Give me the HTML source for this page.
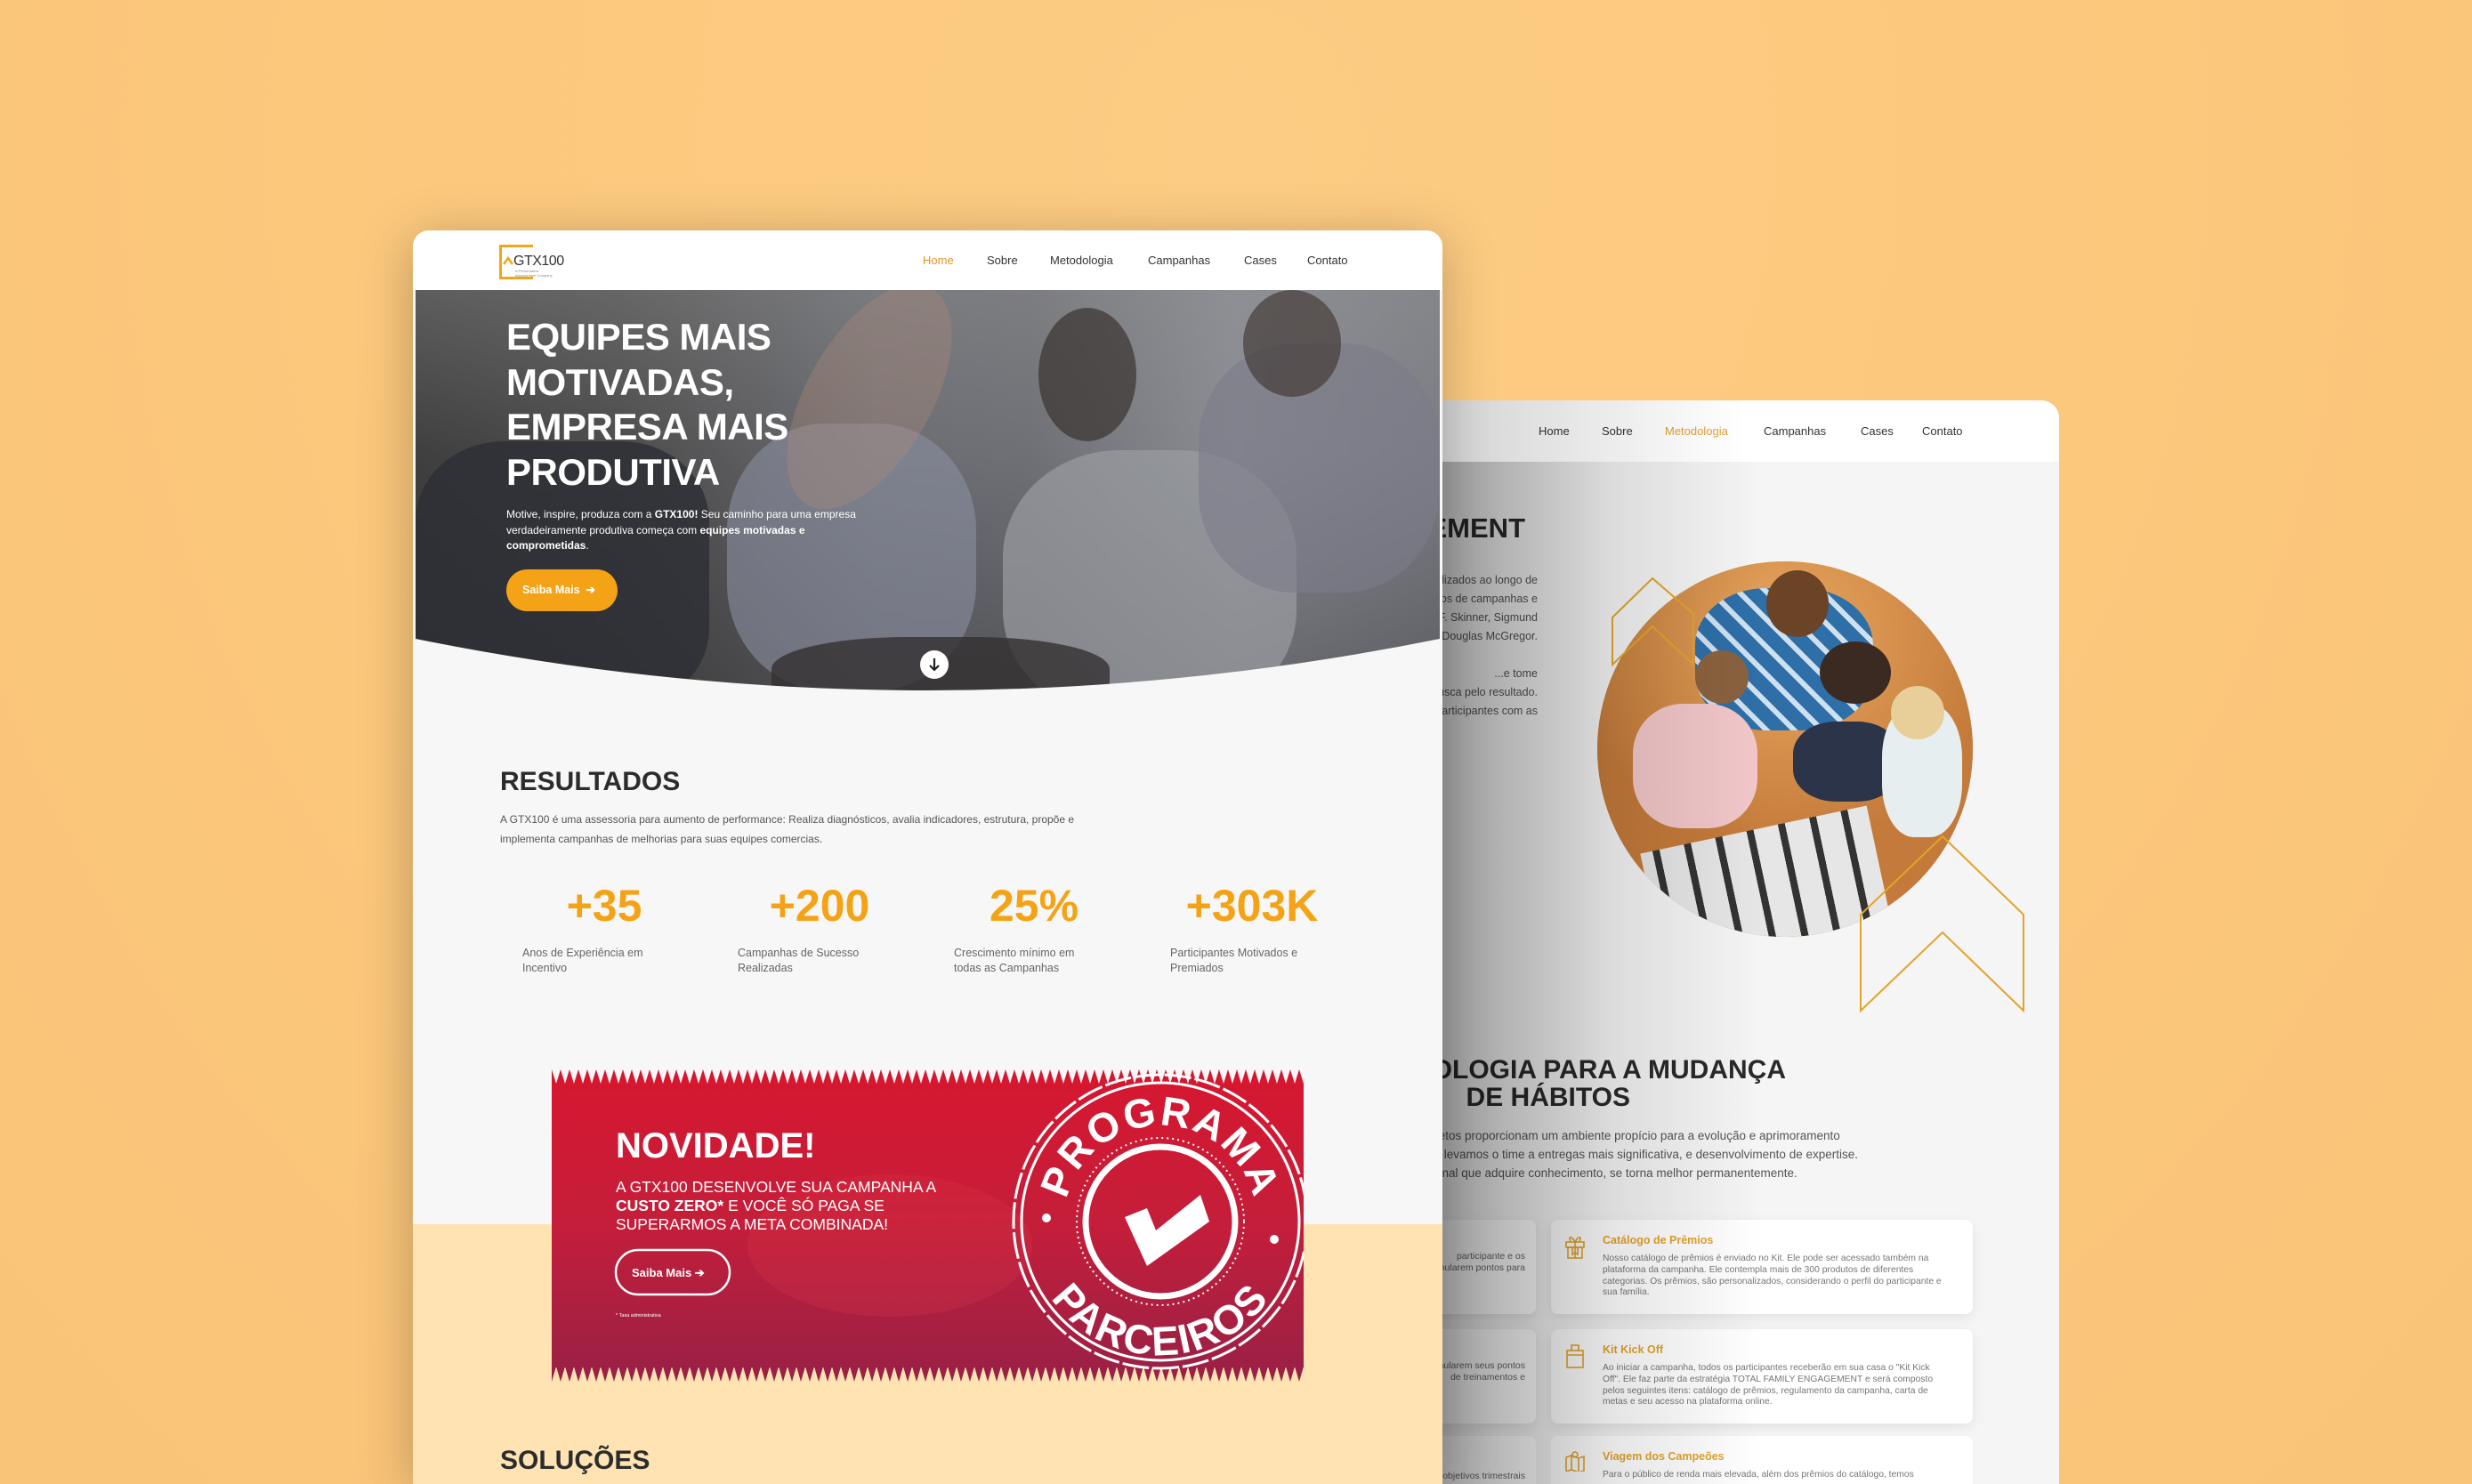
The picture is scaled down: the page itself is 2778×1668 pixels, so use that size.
<!DOCTYPE html>
<html><head><meta charset="utf-8">
<style>
*{margin:0;padding:0;box-sizing:border-box}
html,body{width:2778px;height:1668px;overflow:hidden}
body{background:#FBC87D;font-family:"Liberation Sans",sans-serif;position:relative}
.abs{position:absolute}
.nav a{position:absolute;font-size:13px;color:#333;text-decoration:none;white-space:nowrap}
</style></head><body>
<div class="abs" style="left:0;top:0;width:2778px;height:1668px;background:radial-gradient(ellipse at 50% 10%,#FCCC84 0%,#FBC77B 60%,#F9C378 100%)"></div>

<!-- BACK CARD -->
<div class="abs" style="left:1560px;top:450px;width:754px;height:1218px;border-radius:20px 20px 0 0;background:#f5f5f5;overflow:hidden">
  <div class="abs" style="left:0;top:0;width:754px;height:69px;background:#fff"></div>
  <div class="nav">
    <a style="left:169px;top:27px">Home</a>
    <a style="left:240px;top:27px">Sobre</a>
    <a style="left:311px;top:27px;color:#E0A030">Metodologia</a>
    <a style="left:422px;top:27px">Campanhas</a>
    <a style="left:531px;top:27px">Cases</a>
    <a style="left:600px;top:27px">Contato</a>
  </div>
  <div class="abs" style="right:600px;top:126px;font-weight:bold;font-size:31px;color:#2a2a2a;white-space:nowrap">TOTAL FAMILY ENGAGEMENT</div>
  <div class="abs" style="right:586px;top:192px;font-size:12.5px;color:#555;line-height:21px;text-align:right;white-space:nowrap">
  ...utilizados ao longo de<br>...nos de campanhas e<br>...F. Skinner, Sigmund<br>...e Douglas McGregor.<br><br>...e tome<br>...busca pelo resultado.<br>...participantes com as</div>
  <!-- photo circle -->
  <div class="abs" style="left:235px;top:181px;width:422px;height:422px;border-radius:50%;overflow:hidden;background:#c98a4a">
    <div class="abs" style="left:0;top:0;width:422px;height:422px;background:radial-gradient(circle at 50% 20%,#e8a860 0,#c47a3a 60%)"></div>
    <div class="abs" style="left:110px;top:30px;width:200px;height:160px;border-radius:40%;background:repeating-linear-gradient(45deg,#2e6fa8 0 10px,#cfe0ef 10px 16px,#2e6fa8 16px 22px)"></div>
    <div class="abs" style="left:190px;top:10px;width:70px;height:75px;border-radius:50%;background:#6b4326"></div>
    <div class="abs" style="left:40px;top:160px;width:140px;height:140px;border-radius:40%;background:#f2c7c9"></div>
    <div class="abs" style="left:110px;top:100px;width:60px;height:60px;border-radius:50%;background:#8a6240"></div>
    <div class="abs" style="left:250px;top:90px;width:80px;height:70px;border-radius:50%;background:#3a2a22"></div>
    <div class="abs" style="left:220px;top:180px;width:120px;height:90px;border-radius:40%;background:#2b3448"></div>
    <div class="abs" style="left:320px;top:160px;width:90px;height:150px;border-radius:40%;background:#e6eef0"></div>
    <div class="abs" style="left:330px;top:140px;width:60px;height:60px;border-radius:50%;background:#e8cf9a"></div>
    <div class="abs" style="left:60px;top:300px;width:260px;height:140px;transform:rotate(-12deg);background:repeating-linear-gradient(90deg,#e6e6e6 0 14px,#333 14px 22px,#e6e6e6 22px 36px)"></div>
  </div>
  <svg class="abs" style="left:0;top:0" width="754" height="1218">
    <polygon points="297,200 343,240 343,297 297,254 252,297 252,244" fill="none" stroke="#E3A42A" stroke-width="2"/>
    <polygon points="623,490 714,578 714,686 623,598 531,686 531,578" fill="none" stroke="#E3A42A" stroke-width="2"/>
  </svg>
  <div class="abs" style="right:307px;top:737px;font-weight:bold;font-size:30px;color:#2a2a2a;line-height:31px;white-space:nowrap">METODOLOGIA PARA A MUDANÇA</div>
  <div class="abs" style="right:482px;top:768px;font-weight:bold;font-size:30px;color:#2a2a2a;line-height:31px;white-space:nowrap">DE HÁBITOS</div>
  <div class="abs" style="right:226px;top:816px;font-size:13.5px;color:#555;line-height:21px;white-space:nowrap;text-align:left">Nossos projetos proporcionam um ambiente propício para a evolução e aprimoramento&nbsp;<br>Desta forma levamos o time a entregas mais significativa, e desenvolvimento de expertise.<br>Um profissional que adquire conhecimento, se torna melhor permanentemente.</div>
  <div class="abs" style="left:20px;top:921px;width:146px;height:106px;background:#fff;border-radius:8px;box-shadow:0 4px 14px rgba(0,0,0,.08)"></div>
  <div class="abs" style="left:20px;top:1044px;width:146px;height:106px;background:#fff;border-radius:8px;box-shadow:0 4px 14px rgba(0,0,0,.08)"></div>
  <div class="abs" style="left:20px;top:1164px;width:146px;height:54px;background:#fff;border-radius:8px 8px 0 0"></div>
  <div class="abs" style="right:600px;top:956px;font-size:10.5px;color:#666;line-height:13px;white-space:nowrap;text-align:right">participante e os<br>acumularem pontos para</div>
  <div class="abs" style="right:600px;top:1079px;font-size:10.5px;color:#666;line-height:13px;white-space:nowrap;text-align:right">acumularem seus pontos<br>de treinamentos e</div>
  <div class="abs" style="right:600px;top:1203px;font-size:10.5px;color:#666;white-space:nowrap">objetivos trimestrais</div>
  <!-- right cards -->
  <div class="abs" style="left:183px;top:921px;width:474px;height:106px;background:#fff;border-radius:8px;box-shadow:0 4px 14px rgba(0,0,0,.08)">
    <svg class="abs" style="left:16px;top:16px" width="22" height="28" viewBox="0 0 22 28" fill="none" stroke="#E3A42A" stroke-width="1.6"><rect x="1" y="9" width="20" height="6"/><rect x="3" y="15" width="16" height="12"/><path d="M11 9V27M11 9C7 1 3 3 6 8M11 9C15 1 19 3 16 8M8 15v8l3-2 3 2v-8"/></svg>
    <div class="abs" style="left:58px;top:16px;font-weight:bold;font-size:12.5px;color:#E3A42A">Catálogo de Prêmios</div>
    <div class="abs" style="left:58px;top:38px;font-size:10.3px;color:#777;line-height:12.8px;width:390px">Nosso catálogo de prêmios é enviado no Kit. Ele pode ser acessado também na plataforma da campanha. Ele contempla mais de 300 produtos de diferentes categorias. Os prêmios, são personalizados, considerando o perfil do participante e sua família.</div>
  </div>
  <div class="abs" style="left:183px;top:1044px;width:474px;height:106px;background:#fff;border-radius:8px;box-shadow:0 4px 14px rgba(0,0,0,.08)">
    <svg class="abs" style="left:16px;top:16px" width="22" height="28" viewBox="0 0 22 28" fill="none" stroke="#E3A42A" stroke-width="1.6"><rect x="2" y="8" width="18" height="19"/><path d="M2 13h18M7 8V2h8v6"/></svg>
    <div class="abs" style="left:58px;top:16px;font-weight:bold;font-size:12.5px;color:#E3A42A">Kit Kick Off</div>
    <div class="abs" style="left:58px;top:38px;font-size:10.3px;color:#777;line-height:12.8px;width:390px">Ao iniciar a campanha, todos os participantes receberão em sua casa o "Kit Kick Off". Ele faz parte da estratégia TOTAL FAMILY ENGAGEMENT e será composto pelos seguintes itens: catálogo de prêmios, regulamento da campanha, carta de metas e seu acesso na plataforma online.</div>
  </div>
  <div class="abs" style="left:183px;top:1164px;width:474px;height:54px;background:#fff;border-radius:8px 8px 0 0;overflow:hidden">
    <svg class="abs" style="left:16px;top:16px" width="22" height="24" viewBox="0 0 22 24" fill="none" stroke="#E3A42A" stroke-width="1.6"><path d="M1 8l6-2 8 3 6-2v16l-6 2-8-3-6 2z M7 6v16 M15 9v16"/><circle cx="11" cy="5" r="3"/></svg>
    <div class="abs" style="left:58px;top:16px;font-weight:bold;font-size:12.5px;color:#E3A42A">Viagem dos Campeões</div>
    <div class="abs" style="left:58px;top:38px;font-size:10.3px;color:#777;white-space:nowrap">Para o público de renda mais elevada, além dos prêmios do catálogo, temos</div>
  </div>
  <!-- front card shadow overlay -->
  <div class="abs" style="left:0;top:69px;width:420px;height:1149px;background:linear-gradient(90deg,rgba(0,0,0,.45) 0%,rgba(0,0,0,.3) 25%,rgba(0,0,0,.1) 60%,rgba(0,0,0,0) 100%)"></div>
  <div class="abs" style="left:0;top:0;width:400px;height:69px;background:linear-gradient(90deg,rgba(0,0,0,.2),rgba(0,0,0,0))"></div>
</div>

<!-- FRONT CARD -->
<div class="abs" style="left:464px;top:259px;width:1157px;height:1409px;border-radius:18px 18px 0 0;background:#f7f7f7;overflow:hidden;box-shadow:0 10px 60px rgba(0,0,0,.25)">
  <div class="abs" style="left:0;top:0;width:1157px;height:67px;background:#fff"></div>
  <!-- logo -->
  <div class="abs" style="left:97px;top:16px;width:18px;height:39px;border:3px solid #F2A517;border-right:none"></div>
  <div class="abs" style="left:97px;top:16px;width:38px;height:3px;background:#F2A517"></div>
  <div class="abs" style="left:97px;top:52px;width:38px;height:3px;background:#F2A517"></div>
  <svg class="abs" style="left:101px;top:29px" width="12" height="10"><path d="M1 9L6 2 11 9" fill="none" stroke="#F2A517" stroke-width="2.5"/></svg>
  <div class="abs" style="left:113px;top:26px;font-size:16px;color:#333;letter-spacing:-.5px">GTX100</div>
  <div class="abs" style="left:115px;top:43px;font-size:4px;color:#888;line-height:5px">A Performance<br>Improvement Company</div>
  <div class="nav">
    <a style="left:573px;top:26px;color:#E5922A">Home</a>
    <a style="left:645px;top:26px">Sobre</a>
    <a style="left:716px;top:26px">Metodologia</a>
    <a style="left:826px;top:26px">Campanhas</a>
    <a style="left:934px;top:26px">Cases</a>
    <a style="left:1005px;top:26px">Contato</a>
  </div>
  <!-- hero -->
  <div class="abs" style="left:3px;top:67px;width:1151px;height:460px;overflow:hidden;background:linear-gradient(90deg,#3f3f40 0%,#4d4c4c 20%,#6b6d73 45%,#6f7076 60%,#8a8c93 80%,#7b7d84 100%)">
    <div class="abs" style="left:0;top:0;width:1151px;height:460px;background:linear-gradient(180deg,rgba(150,150,150,.35) 0%,rgba(0,0,0,0) 40%,rgba(20,20,20,.3) 100%)"></div>
    <div class="abs" style="left:350px;top:150px;width:280px;height:300px;border-radius:40%;background:#8a8fa0;opacity:.6"></div>
    <div class="abs" style="left:660px;top:180px;width:330px;height:300px;border-radius:40%;background:#9a9ca3;opacity:.7"></div>
    <div class="abs" style="left:700px;top:20px;width:110px;height:150px;border-radius:50%;background:#3a3330;opacity:.7"></div>
    <div class="abs" style="left:880px;top:60px;width:270px;height:280px;border-radius:40%;background:#7b7c88;opacity:.6"></div>
    <div class="abs" style="left:930px;top:0;width:110px;height:120px;border-radius:50%;background:#3a302b;opacity:.6"></div>
    <div class="abs" style="left:0;top:170px;width:330px;height:300px;border-radius:30%;background:#2c2e35;opacity:.8"></div>
    <div class="abs" style="left:400px;top:390px;width:380px;height:90px;border-radius:40%;background:#333031;opacity:.8"></div>
    <div class="abs" style="left:440px;top:-20px;width:140px;height:280px;transform:rotate(30deg);background:#b08a77;opacity:.35;border-radius:50%"></div>
    <svg class="abs" style="left:0;top:0" width="1151" height="460"><path d="M0,392 Q575,508 1151,392 L1151,460 L0,460 Z" fill="#f7f7f7"/></svg>
    <div class="abs" style="left:567px;top:405px;width:32px;height:32px;border-radius:50%;background:#fff"></div>
    <svg class="abs" style="left:573px;top:411px" width="20" height="20"><path d="M10 3V16M5 11l5 5 5-5" fill="none" stroke="#222" stroke-width="2.2"/></svg>
  </div>
  <div class="abs" style="left:105px;top:95px;font-weight:bold;font-size:42px;line-height:50.5px;color:#fff;letter-spacing:-.5px">EQUIPES MAIS<br>MOTIVADAS,<br>EMPRESA MAIS<br>PRODUTIVA</div>
  <div class="abs" style="left:105px;top:311px;font-size:12px;line-height:17.5px;color:#fff;width:410px">Motive, inspire, produza com a <b>GTX100!</b> Seu caminho para uma empresa verdadeiramente produtiva começa com <b>equipes motivadas e comprometidas</b>.</div>
  <div class="abs" style="left:105px;top:381px;width:125px;height:47px;border-radius:24px;background:#F5A316;color:#fff;font-weight:bold;font-size:12.5px;line-height:47px;padding-left:18px">Saiba Mais &nbsp;➔</div>

  <!-- results -->
  <div class="abs" style="left:98px;top:603px;font-weight:bold;font-size:30px;color:#2c2c2c">RESULTADOS</div>
  <div class="abs" style="left:98px;top:652px;font-size:12px;color:#555;line-height:21.5px;width:700px">A GTX100 é uma assessoria para aumento de performance: Realiza diagnósticos, avalia indicadores, estrutura, propõe e implementa campanhas de melhorias para suas equipes comercias.</div>
  <div class="abs" style="left:115px;top:730px;width:200px;text-align:center;font-weight:bold;font-size:50px;color:#F5A316">+35</div>
  <div class="abs" style="left:357px;top:730px;width:200px;text-align:center;font-weight:bold;font-size:50px;color:#F5A316">+200</div>
  <div class="abs" style="left:598px;top:730px;width:200px;text-align:center;font-weight:bold;font-size:50px;color:#F5A316">25%</div>
  <div class="abs" style="left:843px;top:730px;width:200px;text-align:center;font-weight:bold;font-size:50px;color:#F5A316">+303K</div>
  <div class="abs" style="left:123px;top:804px;font-size:12.5px;color:#666;line-height:17px;width:160px">Anos de Experiência em Incentivo</div>
  <div class="abs" style="left:365px;top:804px;font-size:12.5px;color:#666;line-height:17px;width:160px">Campanhas de Sucesso Realizadas</div>
  <div class="abs" style="left:608px;top:804px;font-size:12.5px;color:#666;line-height:17px;width:160px">Crescimento mínimo em todas as Campanhas</div>
  <div class="abs" style="left:851px;top:804px;font-size:12.5px;color:#666;line-height:17px;width:175px">Participantes Motivados e Premiados</div>

  <div class="abs" style="left:0;top:1117px;width:1157px;height:292px;background:#FFE3B2"></div>

  <!-- banner -->
  <svg class="abs" style="left:156px;top:941px" width="845" height="355">
    <defs>
      <linearGradient id="rg" x1="0" y1="0" x2="0" y2="1"><stop offset="0" stop-color="#D51730"/><stop offset=".5" stop-color="#C41E3A"/><stop offset="1" stop-color="#9C2045"/></linearGradient>
    </defs>
    <rect x="0" y="18" width="845" height="319" fill="url(#rg)"/>
    <path d="M0 18 L0 2 L5 18 L10 2 L15 18 L20 2 L25 18 L30 2 L35 18 L40 2 L45 18 L50 2 L55 18 L60 2 L65 18 L70 2 L75 18 L80 2 L85 18 L90 2 L95 18 L100 2 L105 18 L110 2 L115 18 L120 2 L125 18 L130 2 L135 18 L140 2 L145 18 L150 2 L155 18 L160 2 L165 18 L170 2 L175 18 L180 2 L185 18 L190 2 L195 18 L200 2 L205 18 L210 2 L215 18 L220 2 L225 18 L230 2 L235 18 L240 2 L245 18 L250 2 L255 18 L260 2 L265 18 L270 2 L275 18 L280 2 L285 18 L290 2 L295 18 L300 2 L305 18 L310 2 L315 18 L320 2 L325 18 L330 2 L335 18 L340 2 L345 18 L350 2 L355 18 L360 2 L365 18 L370 2 L375 18 L380 2 L385 18 L390 2 L395 18 L400 2 L405 18 L410 2 L415 18 L420 2 L425 18 L430 2 L435 18 L440 2 L445 18 L450 2 L455 18 L460 2 L465 18 L470 2 L475 18 L480 2 L485 18 L490 2 L495 18 L500 2 L505 18 L510 2 L515 18 L520 2 L525 18 L530 2 L535 18 L540 2 L545 18 L550 2 L555 18 L560 2 L565 18 L570 2 L575 18 L580 2 L585 18 L590 2 L595 18 L600 2 L605 18 L610 2 L615 18 L620 2 L625 18 L630 2 L635 18 L640 2 L645 18 L650 2 L655 18 L660 2 L665 18 L670 2 L675 18 L680 2 L685 18 L690 2 L695 18 L700 2 L705 18 L710 2 L715 18 L720 2 L725 18 L730 2 L735 18 L740 2 L745 18 L750 2 L755 18 L760 2 L765 18 L770 2 L775 18 L780 2 L785 18 L790 2 L795 18 L800 2 L805 18 L810 2 L815 18 L820 2 L825 18 L830 2 L835 18 L840 2 L845 18 Z" fill="#D51730"/>
    <path d="M0 336 L0 353 L5 336 L10 353 L15 336 L20 353 L25 336 L30 353 L35 336 L40 353 L45 336 L50 353 L55 336 L60 353 L65 336 L70 353 L75 336 L80 353 L85 336 L90 353 L95 336 L100 353 L105 336 L110 353 L115 336 L120 353 L125 336 L130 353 L135 336 L140 353 L145 336 L150 353 L155 336 L160 353 L165 336 L170 353 L175 336 L180 353 L185 336 L190 353 L195 336 L200 353 L205 336 L210 353 L215 336 L220 353 L225 336 L230 353 L235 336 L240 353 L245 336 L250 353 L255 336 L260 353 L265 336 L270 353 L275 336 L280 353 L285 336 L290 353 L295 336 L300 353 L305 336 L310 353 L315 336 L320 353 L325 336 L330 353 L335 336 L340 353 L345 336 L350 353 L355 336 L360 353 L365 336 L370 353 L375 336 L380 353 L385 336 L390 353 L395 336 L400 353 L405 336 L410 353 L415 336 L420 353 L425 336 L430 353 L435 336 L440 353 L445 336 L450 353 L455 336 L460 353 L465 336 L470 353 L475 336 L480 353 L485 336 L490 353 L495 336 L500 353 L505 336 L510 353 L515 336 L520 353 L525 336 L530 353 L535 336 L540 353 L545 336 L550 353 L555 336 L560 353 L565 336 L570 353 L575 336 L580 353 L585 336 L590 353 L595 336 L600 353 L605 336 L610 353 L615 336 L620 353 L625 336 L630 353 L635 336 L640 353 L645 336 L650 353 L655 336 L660 353 L665 336 L670 353 L675 336 L680 353 L685 336 L690 353 L695 336 L700 353 L705 336 L710 353 L715 336 L720 353 L725 336 L730 353 L735 336 L740 353 L745 336 L750 353 L755 336 L760 353 L765 336 L770 353 L775 336 L780 353 L785 336 L790 353 L795 336 L800 353 L805 336 L810 353 L815 336 L820 353 L825 336 L830 353 L835 336 L840 353 L845 336 Z" fill="#9C2045"/>
    <ellipse cx="380" cy="200" rx="160" ry="80" fill="#E8404F" opacity=".18"/>
    <!-- stamp -->
    <g transform="translate(684,173)">
      <circle cx="0" cy="0" r="165" fill="none" stroke="#fff" stroke-width="3" stroke-dasharray="30 4"/>
      <circle cx="0" cy="0" r="156" fill="none" stroke="#fff" stroke-width="3"/>
      <circle cx="0" cy="0" r="94" fill="none" stroke="#fff" stroke-width="2" stroke-dasharray="2 4"/>
      <circle cx="0" cy="0" r="84" fill="none" stroke="#fff" stroke-width="7"/>
      <path id="arcT" d="M-101.5,36.9 A108,108 0 1 1 101.5,36.9" fill="none"/>
      <path id="arcB" d="M-141,-51 A150,150 0 1 0 141,-51" fill="none"/>
      <text font-family="Liberation Sans" font-weight="bold" font-size="46" fill="#fff" letter-spacing="2"><textPath href="#arcT" startOffset="50%" text-anchor="middle">PROGRAMA</textPath></text>
      <text font-family="Liberation Sans" font-weight="bold" font-size="46" fill="#fff" letter-spacing="2"><textPath href="#arcB" startOffset="50%" text-anchor="middle">PARCEIROS</textPath></text>
      <circle cx="-128" cy="-4" r="5" fill="#fff"/><circle cx="128" cy="20" r="5" fill="#fff"/>
      <path d="M-40,-5 L-15,-15 L-5,10 L45,-30 L55,0 L-15,50 Z" fill="#fff"/>
    </g>
    <text x="72" y="101" font-family="Liberation Sans" font-weight="bold" font-size="40" fill="#fff">NOVIDADE!</text>
    <text font-family="Liberation Sans" font-size="17.5" fill="#fff"><tspan x="72" y="140">A GTX100 DESENVOLVE SUA CAMPANHA A</tspan><tspan x="72" y="161"><tspan font-weight="bold">CUSTO ZERO*</tspan> E VOCÊ SÓ PAGA SE</tspan><tspan x="72" y="182">SUPERARMOS A META COMBINADA!</tspan></text>
    <rect x="72" y="205" width="128" height="50" rx="25" fill="none" stroke="#fff" stroke-width="2.5"/>
    <text x="90" y="235" font-family="Liberation Sans" font-weight="bold" font-size="13" fill="#fff">Saiba Mais  ➔</text>
    <text x="72" y="280" font-family="Liberation Sans" font-size="5.5" fill="#fff">* Taxa administrativa</text>
  </svg>

  <div class="abs" style="left:98px;top:1366px;font-weight:bold;font-size:30px;color:#2c2c2c">SOLUÇÕES</div>
</div>
</body></html>
